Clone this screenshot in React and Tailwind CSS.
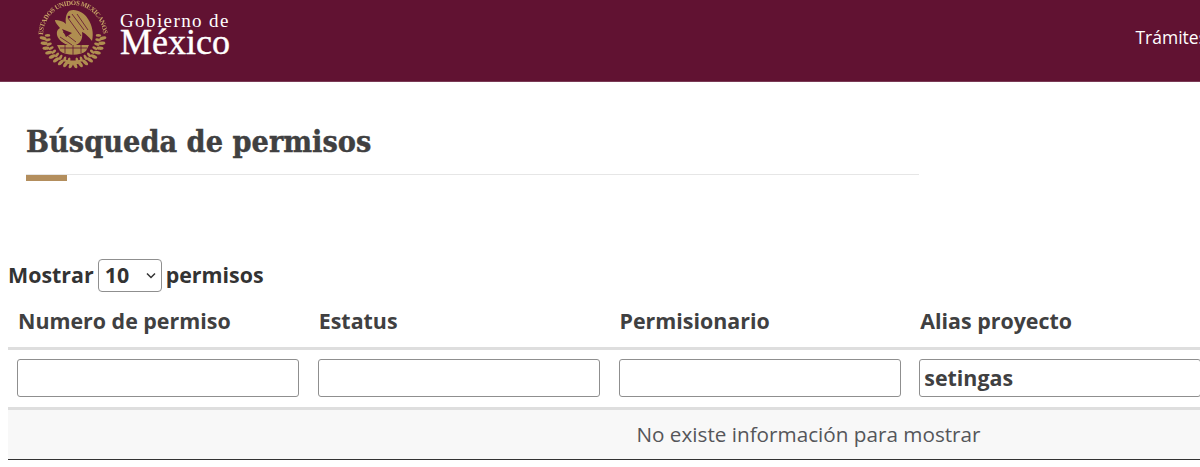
const cols = [
  { title: "Numero de permiso", value: "" },
  { title: "Estatus", value: "" },
  { title: "Permisionario", value: "" },
  { title: "Alias proyecto", value: "setingas" },
];

const leafAngles = [4, 14, 24, 34, 44, 54, 64, 74, 84];

function Emblem() {
  return (
    <svg width="70" height="70" viewBox="0 0 70 70" className="shrink-0 blur-[0.35px]">
      <defs>
        <path id="ring" d="M5 35 A30 30 0 0 1 65 35" fill="none" />
      </defs>
      <text fill="#c8a466" fontSize="6.8" fontWeight="700" fontFamily="'Liberation Serif', serif">
        <textPath href="#ring" textLength="93" lengthAdjust="spacing">ESTADOS UNIDOS MEXICANOS</textPath>
      </text>
      <g fill="#b08e50">
        <path d="M31 11 C37 8 46 12 50 19 C54 25 56 33 54 41 C51 37 47 33 44 32 C45 38 43 43 38 45 C32 47 25 44 21 39 C18 35 18 30 22 28 C20 25 17 23 17 20 C21 20 25 21 28 24 C27 19 28 14 31 11 Z" />
        <path d="M19 45 H51 L48 51 C42 56 28 56 22 51 Z" />
        <path d="M26 59 C31 61 39 61 44 59 L42 63 C38 65 32 65 28 63 Z" />
        {leafAngles.map((a) => (
          <g key={a}>
            <ellipse cx="35" cy="5" rx="1.7" ry="3.6" transform={`rotate(${180 + a} 35 35) rotate(22 35 5)`} />
            <ellipse cx="35" cy="5" rx="1.7" ry="3.6" transform={`rotate(${180 - a} 35 35) rotate(-22 35 5)`} />
            <ellipse cx="35" cy="9.5" rx="1.4" ry="2.8" transform={`rotate(${180 + a + 5} 35 35)`} />
            <ellipse cx="35" cy="9.5" rx="1.4" ry="2.8" transform={`rotate(${180 - a - 5} 35 35)`} />
          </g>
        ))}
      </g>
      <g fill="none" stroke="#611232" strokeWidth="0.8">
        <path d="M34 14 L46 30 M39 14 L50 30 M30 18 L43 36 M25 32 L38 42 M22 37 L34 45" />
        <path d="M22 48 H49 M27 45 V53 M35 45 V55 M43 45 V53" />
      </g>
      <g fill="#611232">
        <circle cx="31" cy="17" r="1.3" />
        <path d="M24 29 L34 33 L28 37 Z" />
      </g>
    </svg>
  );
}

export default function App() {
  return (
    <div className="h-[467px] w-[1200px] overflow-hidden bg-white font-['Open_Sans',sans-serif] text-[#404041]">
      <header className="box-content flex h-[81px] items-start justify-between border-b border-[#7a3a55] bg-[#611232]">
        <div className="ml-[38px] flex items-start gap-[12px]">
          <Emblem />
          <div className="flex flex-col pt-[12px] font-['Liberation_Serif',serif] text-white">
            <span className="text-[19px] leading-[18px] tracking-[1.4px]">Gobierno de</span>
            <span className="text-[36px] leading-[24px] [-webkit-text-stroke:0.4px_white]">México</span>
          </div>
        </div>
        <span className="-mr-[7px] pt-[26px] text-[17.5px] leading-[22px] text-white">Trámites</span>
      </header>

      <main>
        <div className="ml-[26px] mt-[40px] w-[893px] border-b border-[#e6e6e6]">
          <h1 className="h-[52px] font-['DejaVu_Serif_Condensed','DejaVu_Serif',serif] text-[30.3px] font-bold leading-[40px] [-webkit-text-stroke:0.4px_#404041]">Búsqueda de permisos</h1>
        </div>
        <div className="ml-[26px] h-[6px] w-[41px] bg-[#b38e5d]" />

        <div className="ml-[8px] mt-[78px] flex h-[33px] items-center gap-[4px] text-[21.4px] font-bold leading-[28px] text-[#333333]">
          <span className="-translate-y-[1px]">Mostrar</span>
          <div className="relative h-[33px] w-[64px] rounded-[4px] border border-[#8f8f8f] bg-white pl-[6px] leading-[29px]">
            10
            <svg className="absolute right-[4px] top-[9px]" width="12" height="12" viewBox="0 0 12 12" fill="none" stroke="#333" strokeWidth="1.5"><path d="M2 4.5 L6 8.5 L10 4.5" /></svg>
          </div>
          <span className="-translate-y-[1px]">permisos</span>
        </div>

        <table className="ml-[8px] w-[1503.75px] table-fixed border-collapse">
          <thead>
            <tr className="h-[56px] border-b-[3px] border-[#dedede]">
              {cols.map((c) => (
                <th key={c.title} className="w-[300.75px] px-[10px] pt-[4px] text-left text-[21.4px] font-bold leading-[28px]">{c.title}</th>
              ))}
              <th className="w-[300.75px]" />
            </tr>
            <tr className="h-[60px] border-b-[3px] border-[#dedede]">
              {cols.map((c) => (
                <th key={c.title} className="px-[9px] align-middle">
                  <input
                    readOnly
                    value={c.value}
                    className="block h-[38px] w-[282px] rounded-[3px] border border-[#8f8f8f] bg-white px-[4px] pb-[2px] text-[21.4px] font-bold text-[#404041] outline-none"
                  />
                </th>
              ))}
              <th />
            </tr>
          </thead>
        </table>
        <div className="ml-[8px] flex h-[50px] w-[1192px] items-center justify-center border-b border-[#333333] bg-[#f8f8f8] pl-[409px] text-[20.7px] leading-[28px] text-[#55565a]">
          <span className="whitespace-nowrap">No existe información para mostrar</span>
        </div>
      </main>
    </div>
  );
}
